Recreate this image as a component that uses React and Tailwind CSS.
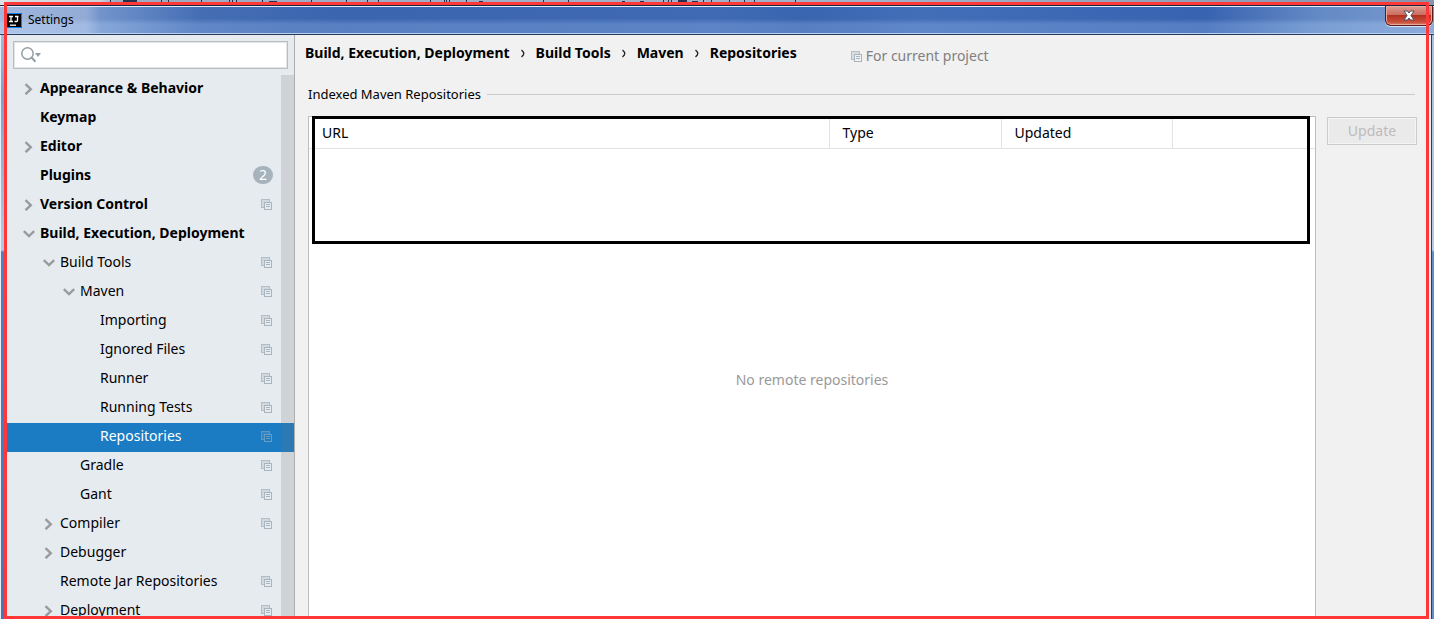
import React from 'react';

const tree = [
  { label: 'Appearance & Behavior', depth: 0, arrow: 'right' },
  { label: 'Keymap', depth: 0 },
  { label: 'Editor', depth: 0, arrow: 'right' },
  { label: 'Plugins', depth: 0, count: 2 },
  { label: 'Version Control', depth: 0, arrow: 'right', project: true },
  { label: 'Build, Execution, Deployment', depth: 0, arrow: 'down' },
  { label: 'Build Tools', depth: 1, arrow: 'down', project: true },
  { label: 'Maven', depth: 2, arrow: 'down', project: true },
  { label: 'Importing', depth: 3, project: true },
  { label: 'Ignored Files', depth: 3, project: true },
  { label: 'Runner', depth: 3, project: true },
  { label: 'Running Tests', depth: 3, project: true },
  { label: 'Repositories', depth: 3, project: true, selected: true },
  { label: 'Gradle', depth: 2, project: true },
  { label: 'Gant', depth: 2, project: true },
  { label: 'Compiler', depth: 1, arrow: 'right', project: true },
  { label: 'Debugger', depth: 1, arrow: 'right' },
  { label: 'Remote Jar Repositories', depth: 1, project: true },
  { label: 'Deployment', depth: 1, arrow: 'right', project: true },
];

const indent = ['pl-4', 'pl-9', 'pl-14', 'pl-19'];

const crumbs = ['Build, Execution, Deployment', 'Build Tools', 'Maven', 'Repositories'];

const ProjectIcon = ({ dim }) => (
  <svg
    className={`w-[11px] h-[11px] shrink-0 ${dim ? 'text-[#6a9cc2]' : 'text-[#a9b5be]'}`}
    viewBox="0 0 11 11"
    fill="none"
    stroke="currentColor"
    shapeRendering="crispEdges"
  >
    <path d="M1 1h7v2H3v5H1z" fill="currentColor" fillOpacity="0.35" stroke="none" />
    <path d="M3 8.5H0.5V0.5H8.5V3" strokeOpacity="0.85" />
    <path d="M3.5 3.5h7v7h-7z" />
    <path d="M5 5.5h4M5 7.5h4" />
  </svg>
);

const Arrow = ({ dir }) => (
  <svg className="w-3 h-3 shrink-0" viewBox="0 0 12 12" fill="none" stroke="#999b9d" strokeWidth="2.4">
    {dir === 'right' && <path d="M2.5 1.2L7.8 6.2L2.5 11.2" />}
    {dir === 'down' && <path d="M0.8 3.2L6 8.2L11.2 3.2" />}
  </svg>
);

const ticks = [
  110, 136, 161, 168, 201, 229, 232, 236, 262, 311, 346, 367, 378, 430, 444, 446, 449, 466, 543, 568,
  663, 668, 671, 703, 711, 729, 744, 754, 795,
];

// bottom edge of the window that lies behind
const WindowBehind = () => (
  <div className="h-[5px] shrink-0 bg-[linear-gradient(90deg,#dcdfe3_0%,#cfd3d9_7%,#9eacc1_8%,#a3b3cb_60%,#8795ac_100%)]">
    <svg className="block h-[2px] w-[800px]" viewBox="0 0 800 2" fill="#26304f" shapeRendering="crispEdges" aria-hidden="true">
      {ticks.map((x) => (
        <rect key={x} x={x} width="1" height="2" />
      ))}
      <path d="M123 0h14v2h-14zM269 1h8v1h-8zM479 1h4v1h-4zM622 1h3v1h-3zM640 1h4v1h-4zM678 0h9v2h-9zM692 1h6v1h-6z" />
    </svg>
  </div>
);

const TitleBar = () => (
  <header className="flex items-start h-[30px] shrink-0 pl-[7px] border-t border-[#1b2740] border-b border-b-[#27395c] bg-[linear-gradient(180deg,#1f4a9a22_0%,#1f4a9a22_45%,#9bbcec44_65%,#9bbcec44_100%),linear-gradient(90deg,#b5c8e8_0%,#a3bade_6%,#7f9fd3_7%,#4a73b8_14%,#3f69b2_24%,#4570b8_50%,#3d68b2_56%,#4874bd_64%,#3b66b3_84%,#6f94cb_92%,#86a5d6_100%)] shadow-[inset_0_1px_0_#e2ebf7,inset_0_-1px_0_#b9d0ee]">
    <div className="flex items-center gap-[6px] h-7 flex-1">
      <svg className="w-[15px] h-[15px] shrink-0" viewBox="0 0 15 15">
        <rect width="15" height="15" fill="#000" />
        <path d="M0 0.5h14.5v14H0" fill="none" stroke="#147ff0" />
        <path d="M2 3.5h4M4 3.5v5M2 8.5h4M8 3.5h3.500M10.5 3.5v4q0 1-1 1h-2" fill="none" stroke="#fff" strokeWidth="1.3" />
        <path d="M3 12.2h6" stroke="#fff" strokeWidth="1.3" />
      </svg>
      <h1 className="text-xs text-black">Settings</h1>
    </div>
    <button
      aria-label="Close"
      className="flex items-center justify-center w-12 h-5 mr-px pb-px rounded-b-md border border-t-0 border-[#5a1a1a] bg-[linear-gradient(180deg,#dd9c92_0%,#cb6f62_45%,#b23220_50%,#c9503c_85%,#d98873_100%)] shadow-[0_1px_0_#dbe6f5,inset_0_0_0_1px_#e9a99e]"
    >
      <svg className="w-3 h-[11px]" viewBox="0 0 12 11">
        <path d="M1 1h3.400L6 3l1.600-2H11L8 5.500 11 10H7.600L6 8 4.400 10H1l3-4.500z" fill="#fff" stroke="#4b5068" />
      </svg>
    </button>
  </header>
);

const TreeRow = ({ item }) => (
  <li>
    <a
      href="#"
      aria-current={item.selected ? 'page' : undefined}
      className={`flex items-center h-[29px] pb-[2px] pr-[22px] ${indent[item.depth]} ${item.selected ? 'bg-[#1b7cc4] text-white' : 'text-black'}`}
    >
      <span className="w-[17px] shrink-0 flex">{item.arrow && <Arrow dir={item.arrow} />}</span>
      <span className={`flex-1 pb-[2px] whitespace-nowrap ${item.depth === 0 ? 'font-bold' : ''}`}>{item.label}</span>
      {item.count && (
        <span className="flex items-center justify-center w-5 h-[18px] -mr-px mb-px rounded-full bg-[#a6b3bc] text-white">
          {item.count}
        </span>
      )}
      {item.project && <ProjectIcon dim={item.selected} />}
    </a>
  </li>
);

const Sidebar = () => (
  <aside className="flex flex-col w-72 shrink-0 border-r border-[#adadad] bg-[#e6ebf0]">
    <label className="flex items-center h-7 mx-[6px] mt-[6px] mb-[6px] pl-[7px] border border-[#b9bec2] bg-white outline-1 -outline-offset-2 outline-[#e1e5e8]">
      <svg className="w-5 h-4 shrink-0" viewBox="0 0 20 16" fill="none" stroke="#929ea5" strokeWidth="1.5">
        <circle cx="6.500" cy="6.500" r="5.700" />
        <path d="M10.500 10.500L14.500 14.800" strokeWidth="2" />
        <path d="M14 6h6l-3 4z" fill="#929ea5" stroke="none" />
      </svg>
      <input type="text" aria-label="Search settings" className="flex-1 min-w-0 px-1 outline-none" />
    </label>
    <nav className="relative flex-1 min-h-0 overflow-hidden" aria-label="Settings">
      <ul>
        {tree.map((item) => (
          <TreeRow key={item.label} item={item} />
        ))}
      </ul>
      {/* scrollbar track over the rows */}
      <div className="absolute inset-y-0 right-0 w-[13px] bg-[#73737a]/20" />
    </nav>
  </aside>
);

const RepositoriesTable = () => (
  <div className="relative flex flex-col flex-1 border border-b-0 border-[#bfbfbf] bg-white">
    <table className="w-full table-fixed text-left">
      <thead>
        <tr className="h-[31px] border-b border-[#e3e3e3]">
          <th className="font-normal pl-[13px] pt-px">URL</th>
          <th className="w-[172px] font-normal pl-[13px] pt-px border-l border-[#e3e3e3]">Type</th>
          <th className="w-[171px] font-normal pl-[13px] pt-px border-l border-[#e3e3e3]">Updated</th>
          <th className="w-[143px] border-l border-[#e3e3e3]" aria-label="Actions" />
        </tr>
      </thead>
    </table>
    <p className="flex flex-1 items-center justify-center pb-2 text-[#999999]">No remote repositories</p>
    <div className="absolute -top-px left-[3px] right-[5px] h-32 border-[3px] border-black pointer-events-none" />
  </div>
);

const Content = () => (
  <main className="flex flex-col flex-1 min-w-0 bg-[#f1f1f1]">
    <div className="flex items-center h-9 pl-[10px]">
      <nav className="flex items-center gap-[10px] font-bold" aria-label="Breadcrumb">
        {crumbs.map((crumb, i) => (
          <React.Fragment key={crumb}>
            {i > 0 && (
              <svg className="w-[6px] h-[9px]" viewBox="0 0 6 9" fill="none" stroke="#222" strokeWidth="1.3" aria-hidden="true">
                <path d="M1.500 1Q3.800 3 3.800 4.500T1.500 8" />
              </svg>
            )}
            <a href="#">{crumb}</a>
          </React.Fragment>
        ))}
      </nav>
      <div className="flex items-center gap-1 ml-[54px] pt-[6px] text-[#808080]">
        <ProjectIcon />
        <span>For current project</span>
      </div>
    </div>
    <section className="flex flex-col flex-1 pl-[13px] pr-[14px]">
      <div className="flex items-center gap-[6px] h-[45px] pt-2 pb-[6px]">
        <h2 className="text-[13px] text-black">Indexed Maven Repositories</h2>
        <div className="flex-1 h-px mr-[2px] bg-[#cbcbcb]" />
      </div>
      <div className="flex flex-1 gap-[11px]">
        <RepositoriesTable />
        <button
          disabled
          className="w-[90px] h-7 mt-px border border-[#cbcbcb] bg-[#eaeaea] text-[#bcbcbc] shadow-[inset_0_0_0_1px_#f4f4f4]"
        >
          Update
        </button>
      </div>
    </section>
  </main>
);

const App = () => {
  return (
    <div className="relative flex flex-col h-screen overflow-hidden bg-white text-sm text-black font-['Noto_Sans','Open_Sans',sans-serif]">
      <WindowBehind />
      <TitleBar />
      <div className="flex flex-1 min-h-0">
        <div className="w-[7px] shrink-0 border-l border-[#e8eef6] bg-[linear-gradient(180deg,#9fb9e0_0px,#7f9fd0_60px,#b7c8e4_215px,#4f7fc4_217px,#4a74b8_100%)]" />
        <Sidebar />
        <Content />
        <div className="w-[3px] shrink-0 border-l border-[#2c3e5c] bg-[linear-gradient(180deg,#a8bfe2_0px,#b7c8e4_215px,#5f8ecb_217px,#5f8ecb_100%)]" />
      </div>
      {/* highlight frame around the window */}
      <div className="absolute top-[2px] bottom-0 left-1 right-[5px] border-[3px] border-[#ff3737] pointer-events-none" />
    </div>
  );
};

export default App;
